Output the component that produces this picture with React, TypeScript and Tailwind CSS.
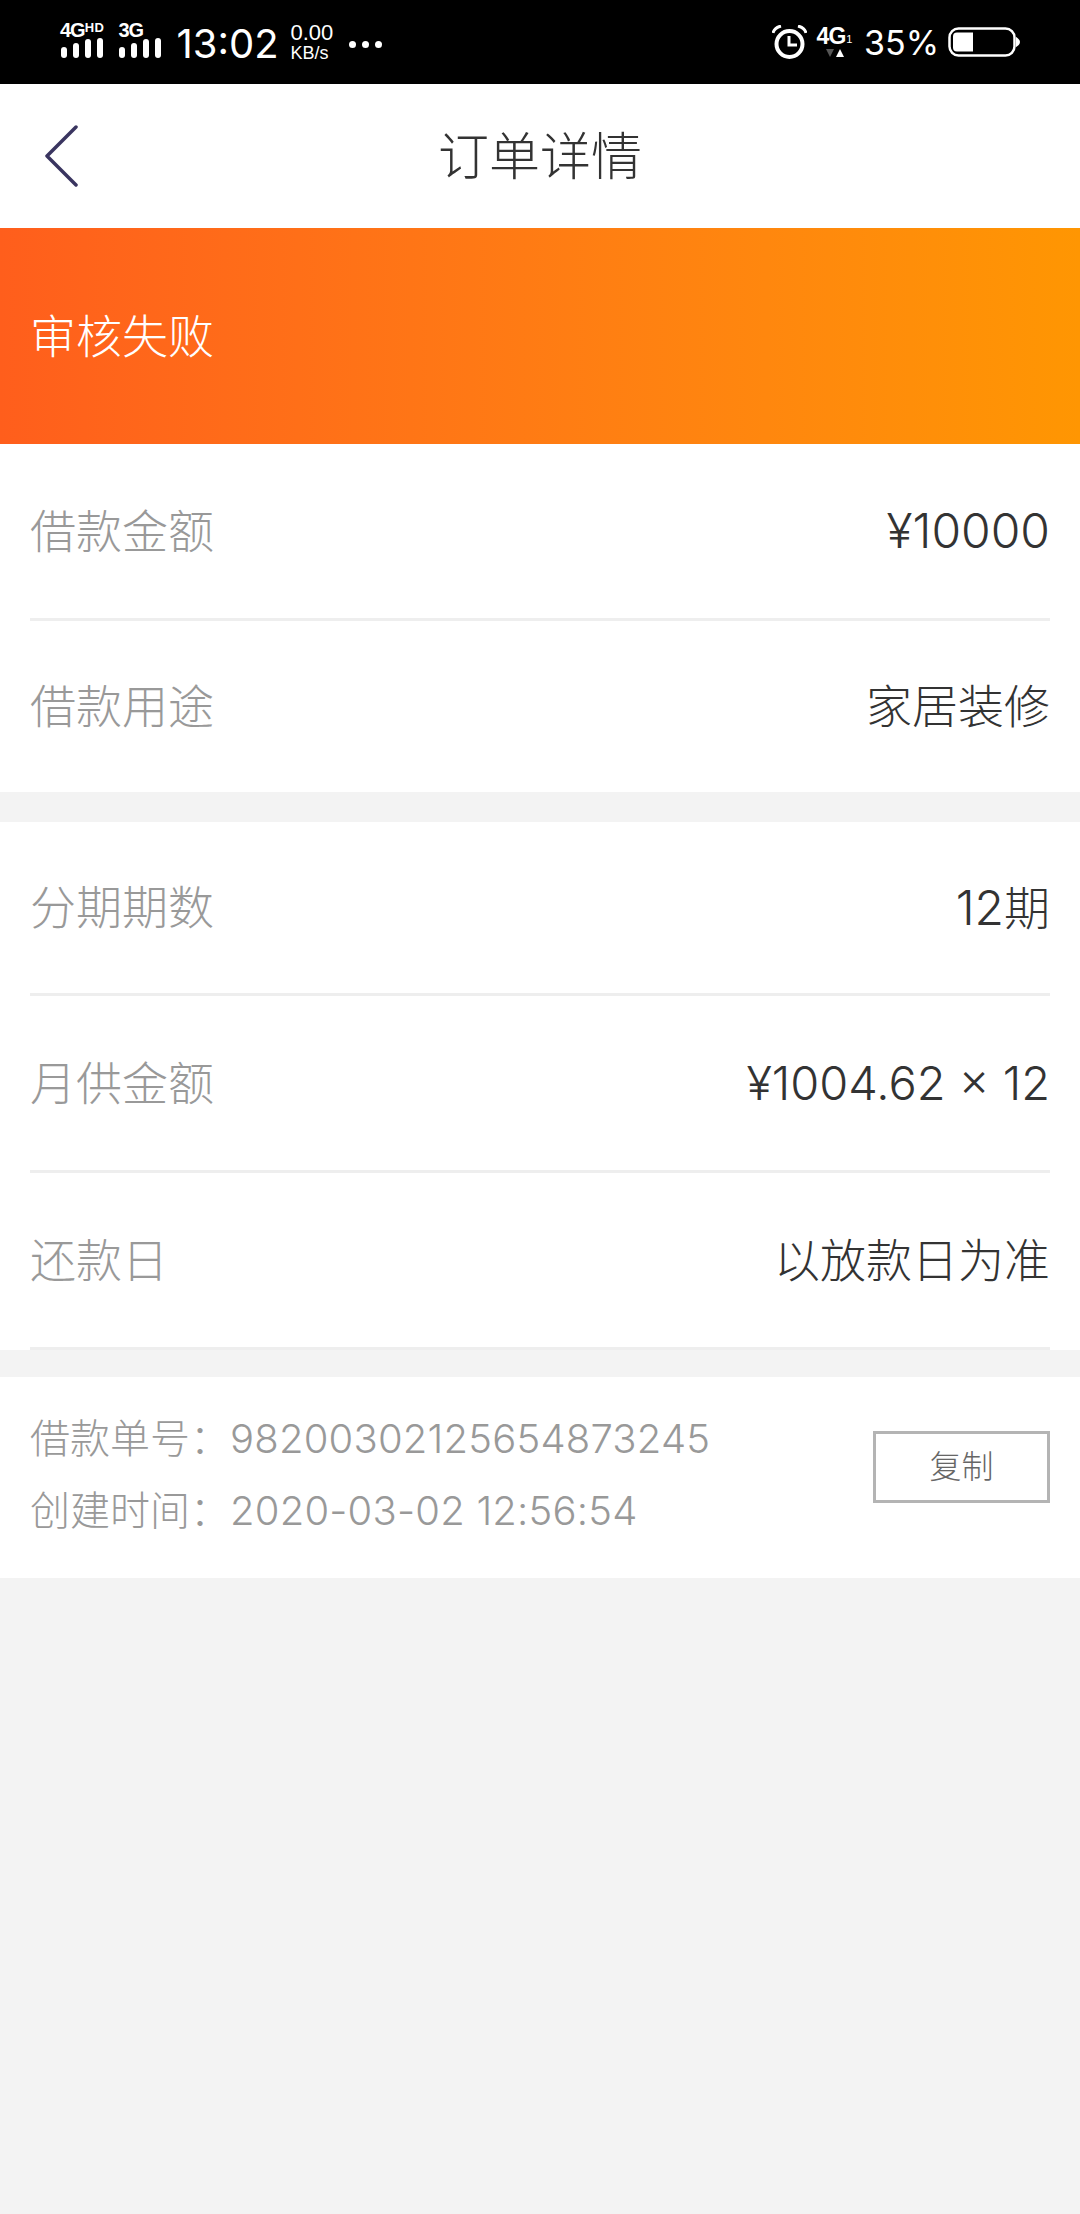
import type { ReactNode } from 'react';

const font = '[font-family:Inter,"Noto_Sans_CJK_SC",sans-serif]';

function Row({ label, value, height, line = true }: { label: string; value: ReactNode; height: string; line?: boolean }) {
  return (
    <div className={`flex items-center justify-between ${height} ${line ? 'border-b-[3px] border-[#eeeeee]' : ''}`}>
      <span className="text-[46px] font-light text-[#999999]">{label}</span>
      <span className="text-[46px] font-light text-[#333333]">{value}</span>
    </div>
  );
}

function SignalBars() {
  return (
    <svg width="44" height="20" viewBox="0 0 44 20" fill="white">
      <rect x="1" y="9" width="6" height="11" rx="3" />
      <rect x="13" y="5" width="6" height="15" rx="3" />
      <rect x="25" y="1" width="6" height="19" rx="3" />
      <rect x="37" y="0" width="6" height="20" rx="3" />
    </svg>
  );
}

function StatusBar() {
  return (
    <div className="flex h-[84px] items-center justify-between bg-black px-[60px] text-white">
      <div className="flex items-center">
        <div className="mr-[14px] mb-[5px] flex flex-col items-start">
          <span className="flex h-[16px] items-start text-[20px] leading-[16px] font-bold tracking-[-1px] [font-family:'Liberation_Sans']">
            4G<span className="text-[13px] leading-[12px] tracking-[0.5px]">HD</span>
          </span>
          <SignalBars />
        </div>
        <div className="mr-[14px] mb-[5px] flex flex-col items-start">
          <span className="h-[16px] text-[20px] leading-[16px] font-bold tracking-[-1px] [font-family:'Liberation_Sans']">3G</span>
          <SignalBars />
        </div>
        <span className="mt-[4px] mr-[14px] w-[100px] text-[40px] leading-none">13:02</span>
        <div className="mr-[14px] flex w-[45px] flex-col items-start leading-none [font-family:'Liberation_Sans']">
          <span className="text-[22px]">0.00</span>
          <span className="text-[18px]">KB/s</span>
        </div>
        <div className="mt-[4px] flex gap-[6px]">
          <span className="h-[7px] w-[7px] rounded-full bg-white" />
          <span className="h-[7px] w-[7px] rounded-full bg-white" />
          <span className="h-[7px] w-[7px] rounded-full bg-white" />
        </div>
      </div>
      <div className="flex items-center">
        <svg width="35" height="34" viewBox="0 0 35 34" fill="none" stroke="white" className="mr-[11px]">
          <circle cx="17.500" cy="19" r="13" strokeWidth="4" />
          <path d="M17 11v9h8" strokeWidth="3" />
          <path d="M1 8c1-4 4-6 8-7M34 8c-1-4-4-6-8-7" strokeWidth="3" />
        </svg>
        <div className="mr-[13px] flex w-[33px] flex-col items-center">
          <span className="flex h-[20px] items-end text-[23px] leading-[18px] font-bold tracking-[-1px] [font-family:'Liberation_Sans']">
            4G<span className="ml-[1px] text-[11px] leading-[11px] font-normal tracking-normal">1</span>
          </span>
          <svg width="20" height="10" viewBox="0 0 20 10" className="mt-[4px]">
            <path d="M1 0h8L5 8z" fill="#555555" />
            <path d="M11 8h8L15 0z" fill="white" />
          </svg>
        </div>
        <span className="mt-[2px] mr-[14px] w-[70px] text-[34px] leading-none">35%</span>
        <svg width="72" height="30" viewBox="0 0 72 30" fill="none">
          <rect x="1.500" y="1.500" width="65" height="27" rx="9" stroke="white" strokeWidth="2.500" />
          <path d="M5 9.500a4 4 0 0 1 4-4h16v19H9a4 4 0 0 1-4-4z" fill="white" />
          <path d="M68 10c2 1 4 3 4 5s-2 4-4 5z" fill="white" />
        </svg>
      </div>
    </div>
  );
}

export default function App() {
  return (
    <div className={`flex min-h-[2214px] flex-col bg-[#f3f3f3] ${font}`}>
      <StatusBar />
      <div className="relative flex h-[144px] items-center justify-center bg-white">
        <svg width="34" height="62" viewBox="0 0 34 62" fill="none" className="absolute top-[41px] left-[44px]">
          <path d="M32 2 3 31l29 29" stroke="#3a3560" strokeWidth="3.500" strokeLinecap="round" strokeLinejoin="round" />
        </svg>
        <span className="mt-[2px] text-[51px] font-light text-[#333333]">订单详情</span>
      </div>
      <div className="flex h-[216px] items-center bg-gradient-to-r from-[#ff5e1c] to-[#ff9602] px-[30px]">
        <span className="text-[46px] font-light text-white">审核失败</span>
      </div>

      <div className="bg-white px-[30px]">
        <Row label="借款金额" value={<span className="text-[48px]">¥10000</span>} height="h-[177px]" />
        <Row label="借款用途" value="家居装修" height="h-[171px]" line={false} />
      </div>

      <div className="mt-[30px] bg-white px-[30px]">
        <Row label="分期期数" value={<><span className="text-[48px]">12</span>期</>} height="h-[174px]" />
        <Row label="月供金额" value={<span className="text-[47px]">¥1004.62 × 12</span>} height="h-[177px]" />
        <Row label="还款日" value="以放款日为准" height="h-[177px]" />
      </div>

      <div className="mt-[27px] flex h-[201px] items-center justify-between bg-white px-[30px]">
        <div className="mb-[5px] flex flex-col gap-[16px] text-[40px] leading-[56px] font-light text-[#999999]">
          <span>借款单号：<span className="tracking-[0.2px]">98200302125654873245</span></span>
          <span>创建时间：<span className="tracking-[0.2px]">2020-03-02 12:56:54</span></span>
        </div>
        <div className="mb-[21px] flex h-[72px] w-[177px] items-center justify-center border-[3px] border-[#b4b4b4] text-[32px] font-light text-[#666666]">
          复制
        </div>
      </div>
    </div>
  );
}
